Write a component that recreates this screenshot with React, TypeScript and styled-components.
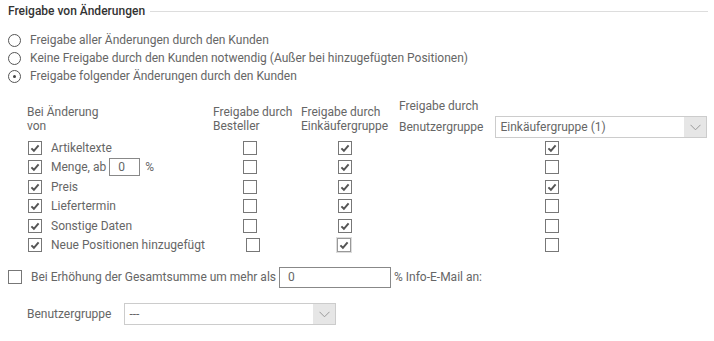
import React from 'react';
import styled, { createGlobalStyle } from 'styled-components';

const GlobalStyle = createGlobalStyle`
  body {
    margin: 0;
    background: #fff;
    font-family: Roboto, 'Liberation Sans', sans-serif;
    font-size: 12px;
    color: #666;
  }
`;

const Page = styled.div`
  width: 714px;
  height: 341px;
  padding: 4px 6px 0 8px;
  box-sizing: border-box;
`;

const Legend = styled.div`
  display: flex;
  align-items: center;
  height: 14px;
`;

const LegendTitle = styled.span`
  font-weight: 500;
  color: #333;
  font-size: 12px;
`;

const LegendLine = styled.span`
  flex: 1;
  height: 1px;
  background: #ddd;
  margin-left: 5px;
`;

const RadioList = styled.div`
  display: flex;
  flex-direction: column;
  margin-top: 13px;
`;

const RadioRow = styled.label`
  display: flex;
  align-items: center;
  height: 18px;
  gap: 9px;
`;

const RadioCircle = styled.span<{ $checked?: boolean }>`
  width: 11px;
  height: 11px;
  border: 1px solid #555;
  border-radius: 50%;
  display: flex;
  align-items: center;
  justify-content: center;
  &::after {
    content: '';
    width: 3px;
    height: 3px;
    border-radius: 50%;
    background: #444;
    display: ${p => (p.$checked ? 'block' : 'none')};
  }
`;

const Matrix = styled.div`
  display: grid;
  grid-template-columns: 186px 88px 98px 309px;
  margin: 14px 0 0 19px;
`;

const HeadCell = styled.div`
  display: flex;
  flex-direction: column;
  justify-content: flex-end;
  line-height: 14px;
  padding-bottom: 5px;
`;

const GroupHead = styled.div`
  display: flex;
  flex-direction: column;
  line-height: 14px;
`;

const GroupRow = styled.div`
  display: flex;
  align-items: center;
  gap: 12px;
  margin-top: 3px;
`;

const Select = styled.div<{ $width: number }>`
  width: ${p => p.$width}px;
  height: 22px;
  box-sizing: border-box;
  border: 1px solid #ccc;
  display: flex;
  align-items: stretch;
  background: #fff;
`;

const SelectValue = styled.span`
  flex: 1;
  display: flex;
  align-items: center;
  padding-left: 4px;
  color: #666;
  font-size: 12px;
`;

const SelectArrow = styled.span`
  width: 22px;
  background: #e6e6e6;
  display: flex;
  align-items: center;
  justify-content: center;
`;

const Cell = styled.div<{ $pad?: number }>`
  height: 19.5px;
  display: flex;
  align-items: center;
  padding-left: ${p => p.$pad || 0}px;
`;

const LabelCell = styled(Cell)`
  gap: 9px;
  padding-left: 1px;
`;

const Box = styled.span<{ $focus?: boolean }>`
  width: 12px;
  height: 12px;
  border: 1px solid ${p => (p.$focus ? '#999' : '#777')};
  box-shadow: ${p => (p.$focus ? '0 0 0 1px #ddd' : 'none')};
  background: #fff;
  display: flex;
  align-items: center;
  justify-content: center;
  flex-shrink: 0;
`;

const SmallInput = styled.span<{ $width: number; $height: number }>`
  width: ${p => p.$width}px;
  height: ${p => p.$height}px;
  box-sizing: border-box;
  border: 1px solid #888;
  display: flex;
  align-items: center;
  padding-left: 8px;
  color: #666;
`;

const Inline = styled.span`
  display: flex;
  align-items: center;
  gap: 3px;
`;

const Percent = styled.span`
  margin-left: 2px;
`;

const TotalRow = styled.div`
  display: flex;
  align-items: center;
  margin-top: 12px;
  height: 20px;
`;

const TotalText = styled.span`
  margin-left: 9px;
  margin-right: 3px;
`;

const TotalSuffix = styled.span`
  margin-left: 3px;
`;

const GroupLine = styled.div`
  display: flex;
  align-items: center;
  margin: 16px 0 0 19px;
  gap: 13px;
`;

const Check = () => (
  <svg width="10" height="10" viewBox="0 0 10 10">
    <path d="M1.4 5.4 L3.9 7.8 L8.6 2.4" fill="none" stroke="#555" strokeWidth="2" />
  </svg>
);

const Chevron = () => (
  <svg width="11" height="7" viewBox="0 0 11 7">
    <path d="M0.5 0.8 L5.5 5.8 L10.5 0.8" fill="none" stroke="#999" strokeWidth="1" />
  </svg>
);

const CheckBox: React.FC<{ checked?: boolean; focus?: boolean }> = ({ checked, focus }) => (
  <Box $focus={focus}>{checked && <Check />}</Box>
);

type Row = {
  label: React.ReactNode;
  besteller: boolean;
  einkauf: boolean;
  gruppe: boolean;
  last?: boolean;
};

const rows: Row[] = [
  { label: 'Artikeltexte', besteller: false, einkauf: true, gruppe: true },
  {
    label: (
      <Inline>
        Menge, ab
        <SmallInput $width={31} $height={18}>0</SmallInput>
        <Percent>%</Percent>
      </Inline>
    ),
    besteller: false,
    einkauf: true,
    gruppe: false
  },
  { label: 'Preis', besteller: false, einkauf: true, gruppe: true },
  { label: 'Liefertermin', besteller: false, einkauf: true, gruppe: false },
  { label: 'Sonstige Daten', besteller: false, einkauf: true, gruppe: false },
  { label: 'Neue Positionen hinzugefügt', besteller: false, einkauf: true, gruppe: false, last: true }
];

export default function App() {
  return (
    <Page>
      <GlobalStyle />
      <Legend>
        <LegendTitle>Freigabe von Änderungen</LegendTitle>
        <LegendLine />
      </Legend>
      <RadioList>
        <RadioRow>
          <RadioCircle />
          Freigabe aller Änderungen durch den Kunden
        </RadioRow>
        <RadioRow>
          <RadioCircle />
          Keine Freigabe durch den Kunden notwendig (Außer bei hinzugefügten Positionen)
        </RadioRow>
        <RadioRow>
          <RadioCircle $checked />
          Freigabe folgender Änderungen durch den Kunden
        </RadioRow>
      </RadioList>
      <Matrix>
        <HeadCell>
          <span>Bei Änderung</span>
          <span>von</span>
        </HeadCell>
        <HeadCell>
          <span>Freigabe durch</span>
          <span>Besteller</span>
        </HeadCell>
        <HeadCell>
          <span>Freigabe durch</span>
          <span>Einkäufergruppe</span>
        </HeadCell>
        <GroupHead>
          <span>Freigabe durch</span>
          <GroupRow>
            <span>Benutzergruppe</span>
            <Select $width={212}>
              <SelectValue>Einkäufergruppe (1)</SelectValue>
              <SelectArrow>
                <Chevron />
              </SelectArrow>
            </Select>
          </GroupRow>
        </GroupHead>
        {rows.map((r, i) => (
          <React.Fragment key={i}>
            <LabelCell>
              <CheckBox checked />
              {r.label}
            </LabelCell>
            <Cell $pad={r.last ? 33 : 30}>
              <CheckBox checked={r.besteller} />
            </Cell>
            <Cell $pad={r.last ? 36 : 37}>
              <CheckBox checked={r.einkauf} focus={r.last} />
            </Cell>
            <Cell $pad={146}>
              <CheckBox checked={r.gruppe} />
            </Cell>
          </React.Fragment>
        ))}
      </Matrix>
      <TotalRow>
        <CheckBox />
        <TotalText>Bei Erhöhung der Gesamtsumme um mehr als</TotalText>
        <SmallInput $width={112} $height={21}>0</SmallInput>
        <TotalSuffix>% Info-E-Mail an:</TotalSuffix>
      </TotalRow>
      <GroupLine>
        <span>Benutzergruppe</span>
        <Select $width={212}>
          <SelectValue>---</SelectValue>
          <SelectArrow>
            <Chevron />
          </SelectArrow>
        </Select>
      </GroupLine>
    </Page>
  );
}
